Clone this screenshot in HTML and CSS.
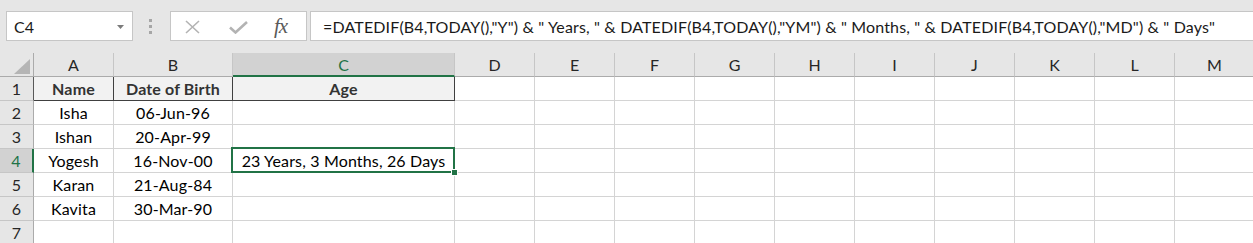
FILE: index.html
```html
<!DOCTYPE html>
<html>
<head>
<meta charset="utf-8">
<link rel="stylesheet" href="styles.css">
</head>
<body>
<div class="app">
  <div class="toolbar">
    <div class="namebox">
      <span class="nb-text">C4</span>
      <svg class="caret" width="7" height="4" viewBox="0 0 7 4"><polygon points="0,0 7,0 3.5,4" fill="#7b7b7b"/></svg>
    </div>
    <div class="grip"><i></i><i></i><i></i></div>
    <div class="fxbox">
      <svg class="ic-x" width="15" height="14" viewBox="0 0 15 14"><path d="M1 1 L14 13 M14 1 L1 13" stroke="#b3b3b3" stroke-width="1.6" fill="none"/></svg>
      <svg class="ic-ok" width="19" height="13" viewBox="0 0 19 13"><path d="M1 6.5 L6.5 11.5 L18 1" stroke="#b3b3b3" stroke-width="2.6" fill="none"/></svg>
      <span class="fx">fx</span>
    </div>
    <div class="formula">=DATEDIF(B4,TODAY(),"Y") &amp; " Years, " &amp; DATEDIF(B4,TODAY(),"YM") &amp; " Months, " &amp; DATEDIF(B4,TODAY(),"MD") &amp; " Days"</div>
  </div>
  <div class="grid">
    <div class="cell corner"><svg width="16" height="15" viewBox="0 0 16 15"><polygon points="16,0 16,15 0,15" fill="#b5b5b5"/></svg></div>
    <div class="cell ch">A</div>
    <div class="cell ch">B</div>
    <div class="cell ch sel">C</div>
    <div class="cell ch">D</div>
    <div class="cell ch">E</div>
    <div class="cell ch">F</div>
    <div class="cell ch">G</div>
    <div class="cell ch">H</div>
    <div class="cell ch">I</div>
    <div class="cell ch">J</div>
    <div class="cell ch">K</div>
    <div class="cell ch">L</div>
    <div class="cell ch">M</div>

    <div class="cell rh rh1">1</div>
    <div class="cell th">Name</div>
    <div class="cell th">Date of Birth</div>
    <div class="cell th">Age</div>
    <div class="cell"></div><div class="cell"></div><div class="cell"></div><div class="cell"></div><div class="cell"></div><div class="cell"></div><div class="cell"></div><div class="cell"></div><div class="cell"></div><div class="cell"></div>

    <div class="cell rh">2</div>
    <div class="cell">Isha</div>
    <div class="cell">06-Jun-96</div>
    <div class="cell"></div>
    <div class="cell"></div><div class="cell"></div><div class="cell"></div><div class="cell"></div><div class="cell"></div><div class="cell"></div><div class="cell"></div><div class="cell"></div><div class="cell"></div><div class="cell"></div>

    <div class="cell rh">3</div>
    <div class="cell">Ishan</div>
    <div class="cell">20-Apr-99</div>
    <div class="cell"></div>
    <div class="cell"></div><div class="cell"></div><div class="cell"></div><div class="cell"></div><div class="cell"></div><div class="cell"></div><div class="cell"></div><div class="cell"></div><div class="cell"></div><div class="cell"></div>

    <div class="cell rh rsel">4</div>
    <div class="cell">Yogesh</div>
    <div class="cell">16-Nov-00</div>
    <div class="cell active">23 Years, 3 Months, 26 Days<span class="outline"><span class="handle"></span></span></div>
    <div class="cell"></div><div class="cell"></div><div class="cell"></div><div class="cell"></div><div class="cell"></div><div class="cell"></div><div class="cell"></div><div class="cell"></div><div class="cell"></div><div class="cell"></div>

    <div class="cell rh">5</div>
    <div class="cell">Karan</div>
    <div class="cell">21-Aug-84</div>
    <div class="cell"></div>
    <div class="cell"></div><div class="cell"></div><div class="cell"></div><div class="cell"></div><div class="cell"></div><div class="cell"></div><div class="cell"></div><div class="cell"></div><div class="cell"></div><div class="cell"></div>

    <div class="cell rh">6</div>
    <div class="cell">Kavita</div>
    <div class="cell">30-Mar-90</div>
    <div class="cell"></div>
    <div class="cell"></div><div class="cell"></div><div class="cell"></div><div class="cell"></div><div class="cell"></div><div class="cell"></div><div class="cell"></div><div class="cell"></div><div class="cell"></div><div class="cell"></div>

    <div class="cell rh">7</div>
    <div class="cell"></div>
    <div class="cell"></div>
    <div class="cell"></div>
    <div class="cell"></div><div class="cell"></div><div class="cell"></div><div class="cell"></div><div class="cell"></div><div class="cell"></div><div class="cell"></div><div class="cell"></div><div class="cell"></div><div class="cell"></div>
  </div>
</div>
</body>
</html>
```
FILE: styles.css
```css
* { box-sizing: border-box; }
html, body { margin: 0; padding: 0; }
body {
  width: 1253px;
  height: 243px;
  overflow: hidden;
  background: #ffffff;
  font-family: Lato, "Open Sans", sans-serif;
  font-size: 16px;
  letter-spacing: 0.15px;
  color: #000;
}
.app { width: 1253px; height: 243px; overflow: hidden; }

.toolbar {
  height: 53px;
  background: #e6e6e6;
  display: flex;
  align-items: flex-start;
  padding: 11px 0 0 6px;
}
.namebox {
  width: 127px;
  height: 30px;
  background: #fff;
  border: 1px solid #c6c6c6;
  display: flex;
  align-items: center;
  padding: 0 8px 0 7px;
  justify-content: space-between;
  color: #1a1a1a;
}
.caret { margin-top: 1px; }
.grip {
  margin-left: 16px;
  width: 3px;
  height: 30px;
  display: flex;
  flex-direction: column;
  justify-content: center;
  gap: 3px;
}
.grip i {
  display: block;
  width: 3px;
  height: 3px;
  background: #a6a6a6;
}
.fxbox {
  margin-left: 18px;
  width: 137px;
  height: 30px;
  background: #fff;
  border: 1px solid #c6c6c6;
  display: flex;
  align-items: center;
  padding-left: 14px;
}
.ic-x { margin-top: 1px; }
.ic-ok { margin-left: 29px; margin-top: 2px; }
.fx {
  margin-left: 26px;
  font-family: "Liberation Serif", "DejaVu Serif", serif;
  font-style: italic;
  font-size: 21px;
  color: #5a5a5a;
  letter-spacing: -1px;
}
.formula {
  margin-left: 3px;
  flex: 1;
  height: 30px;
  margin-right: -2px;
  background: #fff;
  border: 1px solid #c6c6c6;
  display: flex;
  align-items: center;
  padding-left: 12px;
  white-space: nowrap;
  overflow: hidden;
  color: #1a1a1a;
}

.grid {
  display: grid;
  grid-template-columns: 34px 80px 119px 222px repeat(10, 80px);
  grid-auto-rows: 24px;
}
.cell {
  border-right: 1px solid #d4d4d4;
  border-bottom: 1px solid #d4d4d4;
  display: flex;
  align-items: center;
  justify-content: center;
  white-space: nowrap;
  overflow: hidden;
  background: #fff;
}
.ch {
  background: #e6e6e6;
  border-right-color: #c6c6c6;
  border-bottom-color: #ababab;
  color: #262626;
  letter-spacing: 0;
}
.ch.sel {
  background: #d2d2d2;
  border-bottom: 2px solid #217346;
  color: #217346;
}
.corner {
  background: #e6e6e6;
  border-right-color: #ababab;
  border-bottom-color: #ababab;
  justify-content: flex-end;
  align-items: flex-end;
  padding: 0 3px 2px 0;
}
.rh {
  background: #e6e6e6;
  border-right-color: #ababab;
  border-bottom-color: #c6c6c6;
  color: #262626;
}
.rh1 { border-right-color: #595959; }
.rh.rsel {
  background: #d2d2d2;
  border-right: 2px solid #217346;
  color: #217346;
}
.th {
  background: #f2f2f2;
  font-weight: bold;
  color: #333;
  border-right-color: #404040;
  border-bottom-color: #404040;
}
.active {
  position: relative;
  overflow: visible;
}
.outline {
  position: absolute;
  left: -2px;
  top: -2px;
  right: -1px;
  bottom: -1px;
  border: 2px solid #217346;
}
.handle {
  position: absolute;
  right: -5px;
  bottom: -5px;
  width: 7px;
  height: 7px;
  background: #217346;
  border: 1px solid #fff;
}
```
